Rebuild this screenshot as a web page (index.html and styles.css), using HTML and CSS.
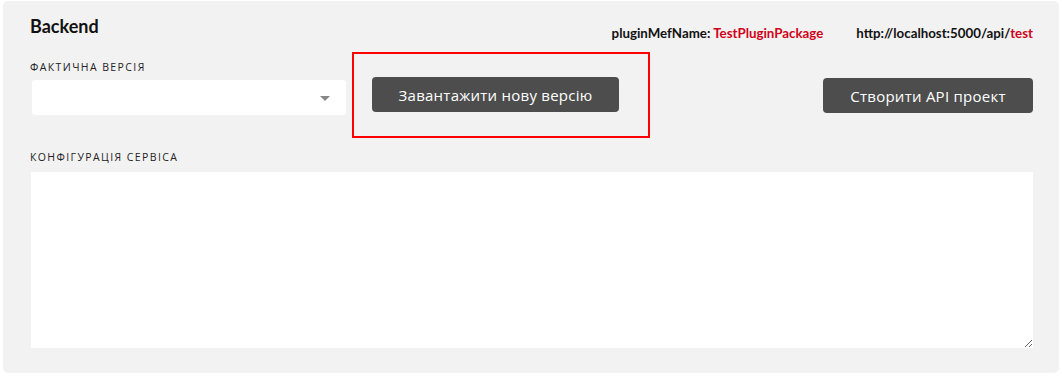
FILE: index.html
```html
<!DOCTYPE html>
<html lang="uk">
<head>
    <meta charset="UTF-8">
    <meta name="viewport" content="width=device-width, initial-scale=1.0">
    <title>Backend</title>
    <link rel="stylesheet" href="styles.css">
</head>
<body>
    <div class="panel">
        <div class="panel-header">
            <h2>Backend</h2>
            <div class="info">
                <span>pluginMefName: <em>TestPluginPackage</em></span>
                <span>http://localhost:5000/api/<em>test</em></span>
            </div>
        </div>

        <div class="controls">
            <div class="field version-field">
                <label>Фактична версія</label>
                <div class="select">
                    <span class="arrow"></span>
                </div>
            </div>

            <div class="highlight">
                <button class="btn">Завантажити нову версію</button>
            </div>

            <button class="btn btn-api">Створити API проект</button>
        </div>

        <div class="field config-field">
            <label>Конфігурація сервіса</label>
            <textarea class="config"></textarea>
        </div>
    </div>
</body>
</html>
```

FILE: styles.css
```css
* {
    margin: 0;
    padding: 0;
    box-sizing: border-box;
}

body {
    background: #fff;
    padding: 1px 3px 0 3px;
    font-family: Lato, "Open Sans", sans-serif;
    color: #111;
}

.panel {
    background: #f2f2f2;
    border-radius: 5px;
    padding: 14px 26px 25px 27px;
}

.panel-header {
    display: flex;
    justify-content: space-between;
    align-items: flex-start;
}

.panel-header h2 {
    font-size: 18px;
    font-weight: 700;
    line-height: 22px;
}

.info {
    display: flex;
    gap: 33px;
    padding-top: 10px;
    font-size: 13.3px;
    font-weight: 700;
    line-height: 17px;
}

.info em {
    font-style: normal;
    color: #d0021b;
}

.controls {
    display: flex;
    align-items: flex-start;
    margin-top: 10px;
}

.field label {
    display: block;
    font-family: "Open Sans", sans-serif;
    font-size: 10.5px;
    text-transform: uppercase;
    letter-spacing: 1.4px;
    color: #222;
    line-height: 14px;
}

.version-field {
    padding-top: 8px;
}

.select {
    width: 314px;
    height: 35px;
    margin: 6px 0 0 2px;
    background: #fff;
    border-radius: 3px;
    position: relative;
}

.arrow {
    position: absolute;
    right: 16px;
    top: 16px;
    border-left: 5px solid transparent;
    border-right: 5px solid transparent;
    border-top: 5px solid #888;
}

.highlight {
    margin-left: 6px;
    width: 298px;
    height: 86px;
    border: 2px solid #f00;
    padding: 23px 0 0 18px;
}

.btn {
    background: #4d4d4d;
    color: #fff;
    border: none;
    border-radius: 4px;
    height: 35px;
    font-family: "Open Sans", sans-serif;
    font-size: 15px;
    letter-spacing: 0.25px;
    cursor: pointer;
}

.highlight .btn {
    width: 247px;
}

.btn-api {
    margin-left: auto;
    margin-top: 26px;
    width: 210px;
}

.config-field {
    margin-top: 12px;
}

.config {
    display: block;
    width: 1002px;
    height: 176px;
    margin: 8px 0 0 1px;
    border: none;
    background: #fff;
    resize: vertical;
}
```
